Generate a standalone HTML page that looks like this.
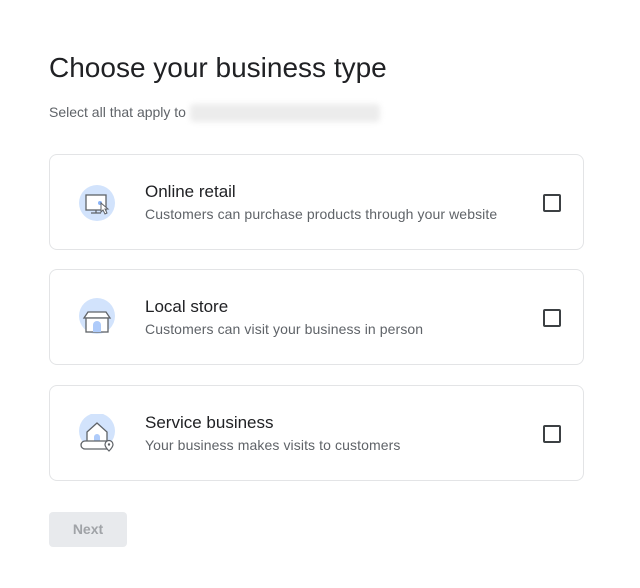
<!DOCTYPE html>
<html><head><style>
body{margin:0;background:#fff;font-family:"Liberation Sans",Arial,sans-serif;}
h1{position:absolute;left:49px;top:52px;margin:0;font-weight:400;font-size:28px;color:#202124;}
.sub{position:absolute;left:49px;top:104px;font-size:14px;color:#5f6368;}
.blur{position:absolute;left:190px;top:104px;width:190px;height:18px;background:#ececec;filter:blur(3px);border-radius:4px;}
.card{position:absolute;left:49px;width:533px;height:94px;border:1px solid #e3e4e6;border-radius:8px;}
.card svg{position:absolute;left:28px;top:28px;}
.t{position:absolute;left:95px;top:27px;font-size:17px;color:#202124;}
.d{position:absolute;left:95px;top:51px;font-size:14px;color:#5f6368;letter-spacing:0.1px;}
.cb{position:absolute;left:493px;top:39px;width:14px;height:14px;border:2px solid #3c4043;border-radius:2px;}
.btn{position:absolute;left:49px;top:512px;width:78px;height:35px;background:#e8eaed;border-radius:4px;color:#a0a3a7;font-size:14px;font-weight:700;text-align:center;line-height:35px;}
</style></head><body>
<h1>Choose your business type</h1>
<div class="sub">Select all that apply to</div><div class="blur"></div>
<div class="card" style="top:154px">
<svg width="40" height="40" viewBox="0 0 40 40"><circle cx="19" cy="20" r="18" fill="#d2e3fc"/><rect x="8" y="12" width="20" height="15" fill="#fff" stroke="#5f6368" stroke-width="1.3"/><path d="M18 27v3M13 30h10" stroke="#5f6368" stroke-width="1.3"/><circle cx="22" cy="20" r="2" fill="#8ab4f8"/><path d="M23 20l7 6-3 0 2 4-2 1-2-4-2 2z" fill="#fff" stroke="#5f6368" stroke-width="1"/></svg>
<div class="t">Online retail</div><div class="d">Customers can purchase products through your website</div><div class="cb"></div></div>
<div class="card" style="top:269px">
<svg width="40" height="40" viewBox="0 0 40 40"><circle cx="19" cy="18" r="18" fill="#d2e3fc"/><path d="M6 20l4-6h18l4 6z" fill="#fff" stroke="#5f6368" stroke-width="1.3"/><rect x="8" y="20" width="22" height="14" fill="#fff" stroke="#5f6368" stroke-width="1.3"/><path d="M15 34v-7a4 4 0 0 1 8 0v7z" fill="#aecbfa"/></svg>
<div class="t">Local store</div><div class="d">Customers can visit your business in person</div><div class="cb"></div></div>
<div class="card" style="top:385px">
<svg width="40" height="40" viewBox="0 0 40 40"><circle cx="19" cy="17" r="18" fill="#d2e3fc"/><path d="M9 18l10-9 10 9v10H9z" fill="#fff" stroke="#5f6368" stroke-width="1.3"/><path d="M16 28v-5a3 3 0 0 1 6 0v5z" fill="#aecbfa"/><rect x="3" y="27" width="30" height="8" rx="4" fill="#fff" stroke="#5f6368" stroke-width="1.3"/><path d="M31 37c-3-3-4-5-4-6.5a4 4 0 0 1 8 0c0 1.5-1 3.5-4 6.5z" fill="#fff" stroke="#5f6368" stroke-width="1.2"/><circle cx="31" cy="30.5" r="1.2" fill="#5f6368"/></svg>
<div class="t">Service business</div><div class="d">Your business makes visits to customers</div><div class="cb"></div></div>
<div class="btn">Next</div>
</body></html>
